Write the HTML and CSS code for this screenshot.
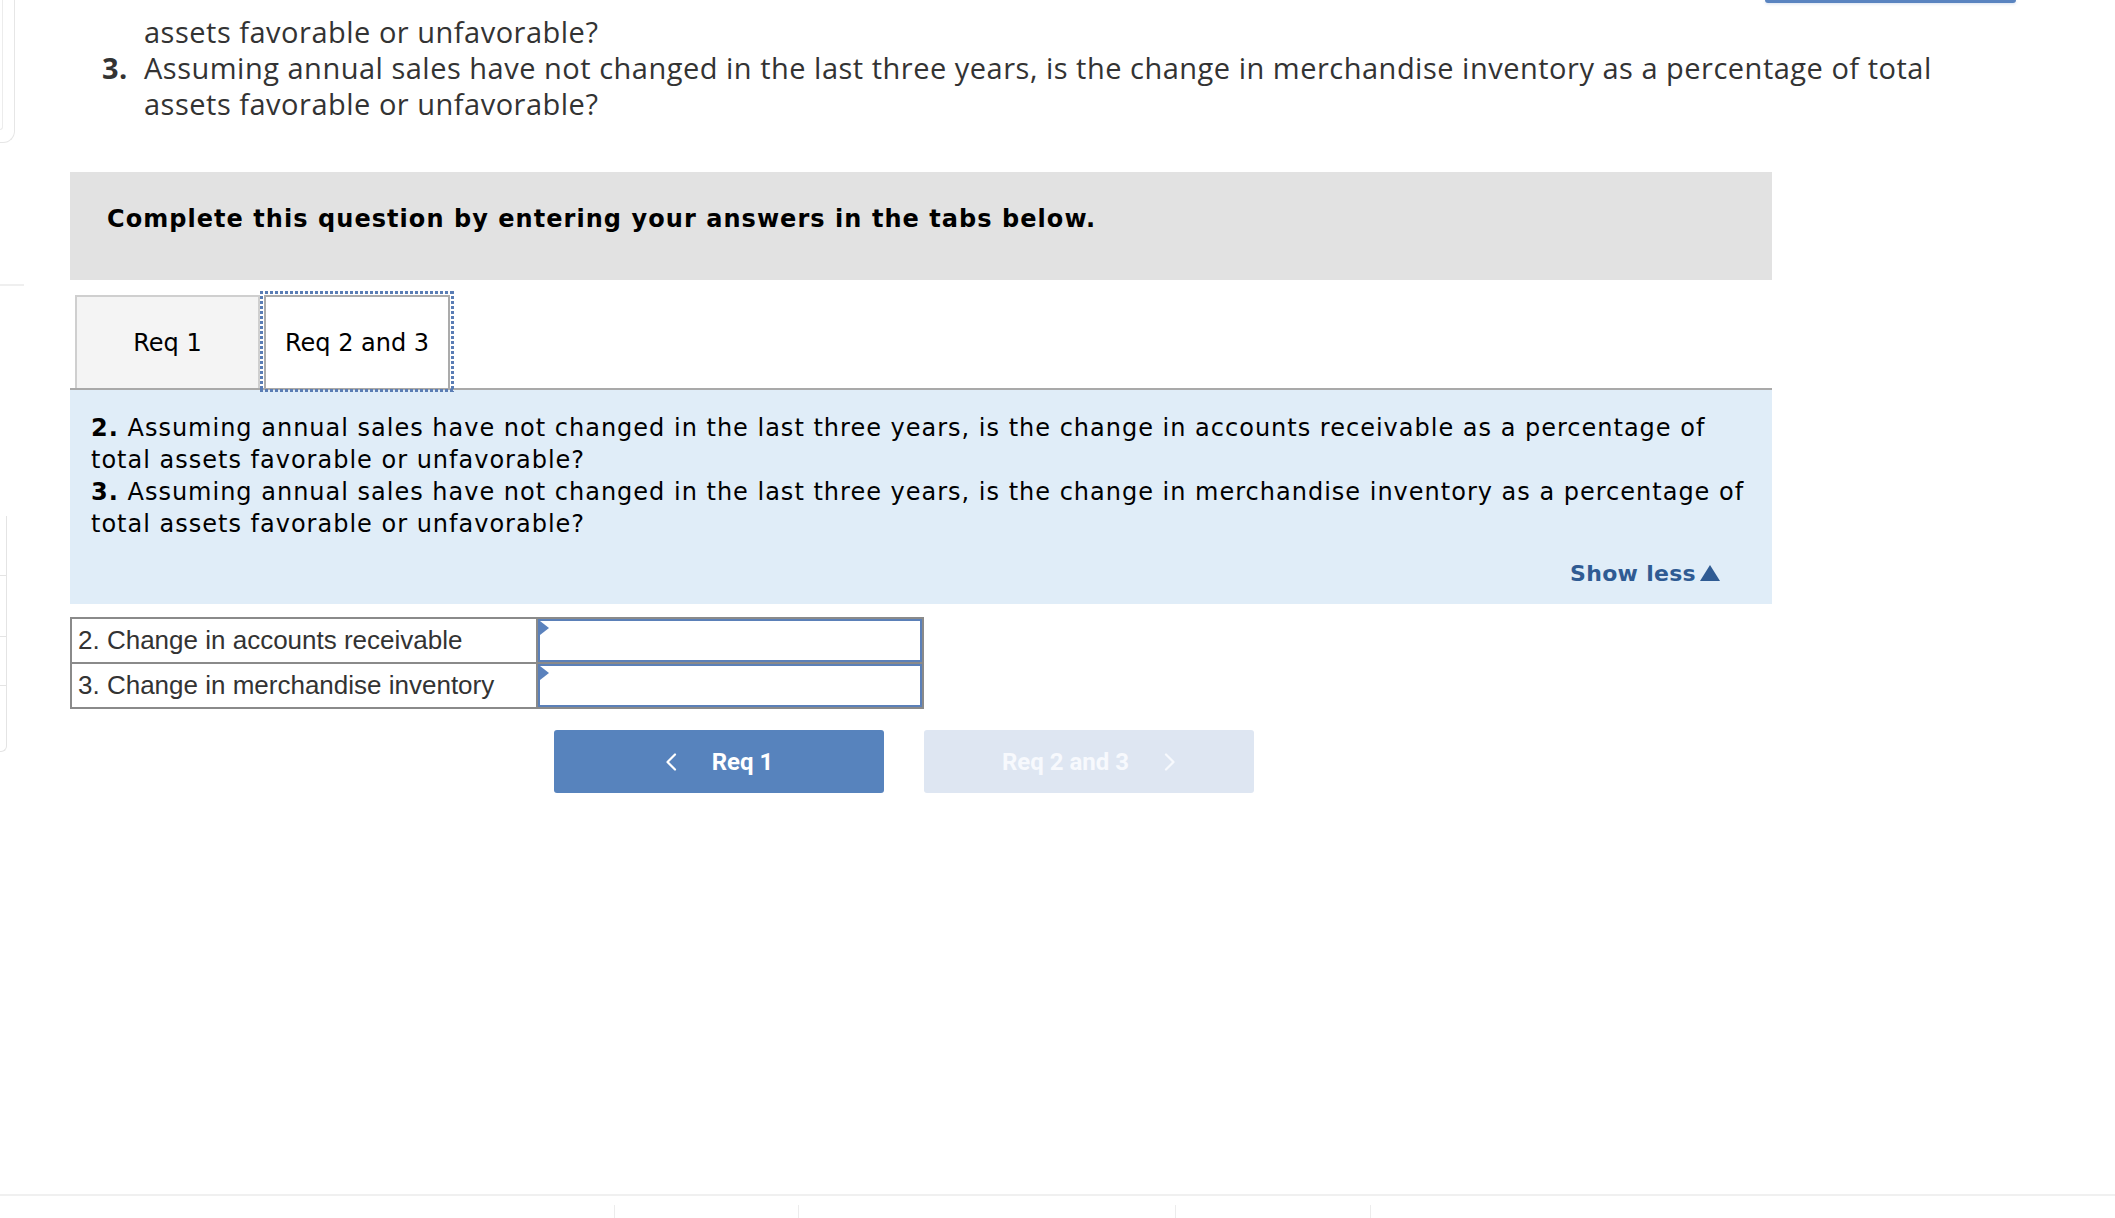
FILE: index.html
```html
<!DOCTYPE html>
<html lang="en">
<head>
<meta charset="utf-8">
<title>Req 2 and 3</title>
<link rel="stylesheet" href="styles.css">
</head>
<body>
<div class="page">
  <aside class="rail">
    <div class="rail-card"><div class="rail-card-inner"></div></div>
    <div class="rail-rule"></div>
    <div class="rail-list">
      <div class="rail-cell h1"></div>
      <div class="rail-cell h2"></div>
      <div class="rail-cell h3"></div>
      <div class="rail-cell h4 last"></div>
    </div>
  </aside>
  <main class="main">
    <div class="topbar"><span class="check-btn"></span></div>
    <div class="intro">
      <div class="intro-cont">assets favorable or unfavorable?</div>
      <div class="intro-item">
        <span class="intro-num">3.</span>
        <span class="intro-text">Assuming annual sales have not changed in the last three years, is the change in merchandise inventory as a percentage of total assets favorable or unfavorable?</span>
      </div>
    </div>

    <div class="instructions">Complete this question by entering your answers in the tabs below.</div>

    <div class="tabs">
      <div class="tab">Req 1</div>
      <div class="tab tab-active">Req 2 and 3</div>
    </div>

    <div class="question">
      <p class="q-text"><b>2.</b> Assuming annual sales have not changed in the last three years, is the change in accounts receivable as a percentage of total assets favorable or unfavorable?<br><b>3.</b> Assuming annual sales have not changed in the last three years, is the change in merchandise inventory as a percentage of total assets favorable or unfavorable?</p>
      <div class="show-less">Show less<span class="tri"></span></div>
    </div>

    <table class="answers">
      <tr>
        <td class="label">2. Change in accounts receivable</td>
        <td class="cell"><div class="input"><span class="flag"></span></div></td>
      </tr>
      <tr>
        <td class="label">3. Change in merchandise inventory</td>
        <td class="cell"><div class="input"><span class="flag"></span></div></td>
      </tr>
    </table>

    <div class="nav">
      <div class="nav-btn nav-prev">
        <svg class="chev" width="12" height="18" viewBox="0 0 12 18"><polyline points="10,1.5 2.5,9 10,16.5" fill="none" stroke="#fff" stroke-width="2.2" stroke-linecap="round" stroke-linejoin="round"/></svg>
        <span>Req 1</span>
      </div>
      <div class="nav-btn nav-next">
        <span>Req 2 and 3</span>
        <svg class="chev" width="12" height="18" viewBox="0 0 12 18"><polyline points="2,1.5 9.5,9 2,16.5" fill="none" stroke="#fff" stroke-width="2.2" stroke-linecap="round" stroke-linejoin="round"/></svg>
      </div>
    </div>
  </main>
</div>
<footer class="footer">
  <div class="foot-item f1"></div>
  <div class="foot-item f2"></div>
  <div class="foot-item f3"></div>
  <div class="foot-item f4"></div>
  <div class="foot-item f5"></div>
</footer>
</body>
</html>
```
FILE: styles.css
```css
html, body {
  margin: 0;
  padding: 0;
  background: #ffffff;
}
body {
  width: 2115px;
  height: 1218px;
  overflow: hidden;
  font-family: "DejaVu Sans", Verdana, sans-serif;
  color: #000;
}
.page {
  display: flex;
  align-items: flex-start;
}

/* left rail fragments */
.rail {
  flex: none;
  width: 24px;
  display: flex;
  flex-direction: column;
}
.rail-card {
  width: 15px;
  height: 143px;
  box-sizing: border-box;
  border-right: 1px solid #e6e6e6;
  border-bottom: 1px solid #e6e6e6;
  border-radius: 0 0 12px 0;
}
.rail-card-inner {
  width: 3px;
  height: 130px;
  box-sizing: border-box;
  border-right: 1px solid #ececec;
  border-bottom: 1px solid #ececec;
  border-radius: 0 0 6px 0;
}
.rail-rule {
  margin-top: 141px;
  width: 24px;
  height: 2px;
  background: #efefef;
}
.rail-list {
  margin-top: 230px;
  width: 7px;
  display: flex;
  flex-direction: column;
}
.rail-cell {
  box-sizing: border-box;
  border-right: 1px solid #e4e4e4;
  border-bottom: 1px solid #e4e4e4;
}
.rail-cell.h1 { height: 60px; }
.rail-cell.h2 { height: 61px; }
.rail-cell.h3 { height: 49px; }
.rail-cell.h4 { height: 66px; }
.rail-cell.last { border-radius: 0 0 6px 0; }

/* main column */
.main {
  flex: none;
  width: 2045px;
  margin-left: 46px;
  display: flex;
  flex-direction: column;
  align-items: flex-start;
}
.topbar {
  align-self: stretch;
  height: 3px;
  display: flex;
  justify-content: flex-end;
  padding-right: 99px;
}
.check-btn {
  width: 251px;
  height: 3px;
  background: #5a84c0;
  border-radius: 0 0 4px 4px;
  box-shadow: 0 1px 3px rgba(90, 132, 192, 0.25);
}

.intro {
  margin-top: 11px;
  width: 1890px;
  font-family: "Open Sans", Lato, sans-serif;
  font-size: 29px;
  line-height: 36px;
  letter-spacing: 0.5px;
  color: #333333;
}
.intro-cont {
  padding-left: 74px;
}
.intro-item {
  display: flex;
  padding-left: 32px;
}
.intro-num {
  flex: none;
  width: 42px;
  font-weight: 700;
}
.intro-text {
  flex: 1;
}

.instructions {
  margin-top: 50px;
  width: 1702px;
  height: 108px;
  box-sizing: border-box;
  padding: 33px 0 0 37px;
  background: #e2e2e2;
  font-weight: 700;
  font-size: 24px;
  line-height: 28px;
  letter-spacing: 1.05px;
  color: #000;
}

.tabs {
  margin-top: 15px;
  width: 1702px;
  box-sizing: border-box;
  padding-left: 5px;
  display: flex;
  align-items: flex-end;
  border-bottom: 2px solid #a9a9a9;
}
.tab {
  height: 93px;
  box-sizing: border-box;
  display: flex;
  align-items: center;
  justify-content: center;
  font-size: 24px;
  line-height: 28px;
  color: #000;
}
.tab:first-child {
  width: 185px;
  background: #f4f4f4;
  border: 2px solid #cfcfcf;
  border-bottom: none;
}
.tab-active {
  width: 186px;
  margin-left: 4px;
  background: #fff;
  border: 2px solid #ababab;
  border-bottom: none;
  position: relative;
  z-index: 1;
}
/* dotted focus ring drawn over the active tab */
.tab-active::after {
  content: "";
  position: absolute;
  left: -6px;
  right: -6px;
  top: -6px;
  bottom: -4px;
  background:
    linear-gradient(to right, #5a7db5 3px, transparent 3px) top left / 5px 3px repeat-x,
    linear-gradient(to right, #5a7db5 3px, transparent 3px) bottom left / 5px 3px repeat-x,
    linear-gradient(to bottom, #5a7db5 3px, transparent 3px) top left / 3px 5px repeat-y,
    linear-gradient(to bottom, #5a7db5 3px, transparent 3px) top right / 3px 5px repeat-y;
  pointer-events: none;
}

.question {
  width: 1702px;
  box-sizing: border-box;
  padding: 22px 12px 17px 21px;
  background: #e0edf8;
  display: flex;
  flex-direction: column;
}
.q-text {
  margin: 0;
  font-size: 24px;
  line-height: 32px;
  letter-spacing: 1px;
  color: #000;
}
.q-text b {
  font-weight: 700;
}
.show-less {
  align-self: flex-end;
  margin-top: 21px;
  margin-right: 40px;
  font-size: 22px;
  font-weight: 700;
  line-height: 26px;
  letter-spacing: 0.3px;
  color: #2f5b93;
  display: flex;
  align-items: center;
}
.show-less .tri {
  width: 0;
  height: 0;
  margin-left: 4px;
  margin-top: -2px;
  border-left: 10px solid transparent;
  border-right: 10px solid transparent;
  border-bottom: 16px solid #2f5b93;
}

.answers {
  margin-top: 13px;
  border-collapse: collapse;
  border: 2px solid #8a8a8a;
  width: 854px;
}
.answers td {
  border: 2px solid #8a8a8a;
  padding: 0;
  height: 42px;
}
.answers .label {
  width: 458px;
  padding-left: 6px;
  font-family: "Liberation Sans", Arial, sans-serif;
  font-size: 26px;
  color: #333;
  white-space: nowrap;
}
.answers .cell {
  width: 386px;
}
.input {
  position: relative;
  height: 43px;
  box-sizing: border-box;
  border: 2px solid #5b80b8;
  background: #fff;
}
.flag {
  position: absolute;
  left: 0;
  top: 0;
  width: 0;
  height: 0;
  border-top: 7px solid transparent;
  border-bottom: 7px solid transparent;
  border-left: 9px solid #5b82bd;
}

.nav {
  margin-top: 21px;
  margin-left: 484px;
  display: flex;
  gap: 40px;
}
.nav-btn {
  width: 330px;
  height: 63px;
  border-radius: 3px;
  display: flex;
  align-items: center;
  justify-content: center;
  gap: 35px;
  font-family: Roboto, "Liberation Sans", sans-serif;
  font-weight: 700;
  font-size: 24px;
  color: #fff;
}
.nav-prev {
  background: #5783bd;
}
.nav-next {
  background: #dee6f2;
  color: #f7f9fd;
}
.nav-next .chev polyline {
  stroke: #f7f9fd;
}

.footer {
  position: fixed;
  left: 0;
  right: 0;
  bottom: 0;
  height: 24px;
  border-top: 2px solid #f0f0f0;
  display: flex;
  padding-top: 9px;
  box-sizing: border-box;
}
.foot-item {
  height: 15px;
}
.foot-item.f1 { width: 614px; }
.foot-item.f2 { width: 183px; border-left: 1px solid #ececec; }
.foot-item.f3 { width: 376px; border-left: 1px solid #ececec; }
.foot-item.f4 { width: 194px; border-left: 1px solid #ececec; }
.foot-item.f5 { flex: 1; border-left: 1px solid #ececec; }
```
